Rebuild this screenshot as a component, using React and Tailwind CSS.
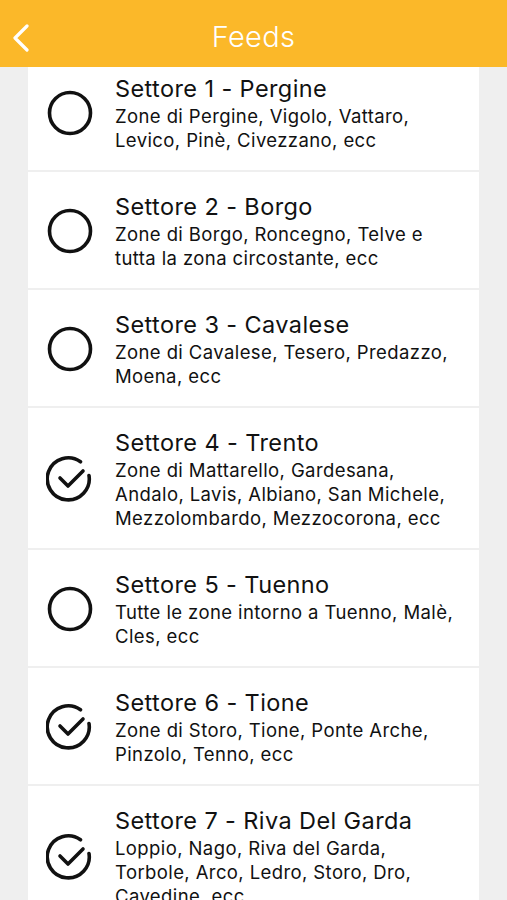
import React from 'react';

const sectors = [
  { title: 'Settore 1 - Pergine', lines: ['Zone di Pergine, Vigolo, Vattaro,', 'Levico, Pinè, Civezzano, ecc'], checked: false },
  { title: 'Settore 2 - Borgo', lines: ['Zone di Borgo, Roncegno, Telve e', 'tutta la zona circostante, ecc'], checked: false },
  { title: 'Settore 3 - Cavalese', lines: ['Zone di Cavalese, Tesero, Predazzo,', 'Moena, ecc'], checked: false },
  { title: 'Settore 4 - Trento', lines: ['Zone di Mattarello, Gardesana,', 'Andalo, Lavis, Albiano, San Michele,', 'Mezzolombardo, Mezzocorona, ecc'], checked: true },
  { title: 'Settore 5 - Tuenno', lines: ['Tutte le zone intorno a Tuenno, Malè,', 'Cles, ecc'], checked: false },
  { title: 'Settore 6 - Tione', lines: ['Zone di Storo, Tione, Ponte Arche,', 'Pinzolo, Tenno, ecc'], checked: true },
  { title: 'Settore 7 - Riva Del Garda', lines: ['Loppio, Nago, Riva del Garda,', 'Torbole, Arco, Ledro, Storo, Dro,', 'Cavedine, ecc'], checked: true },
];

function Radio({ checked }) {
  if (checked) {
    return (
      <svg width="48" height="48" viewBox="0 0 48 48" fill="none" stroke="#111" strokeWidth="3.6" strokeLinecap="round" strokeLinejoin="round">
        <path d="M43 20.5 A21 21 0 1 1 34.5 6.8" />
        <path d="M14 23 L22 31 L37 16" />
      </svg>
    );
  }
  return (
    <svg width="48" height="48" viewBox="0 0 48 48" fill="none" stroke="#111" strokeWidth="3.6">
      <circle cx="24" cy="24" r="20.5" />
    </svg>
  );
}

export default function App() {
  return (
    <div className="w-[507px] h-[900px] overflow-hidden flex flex-col bg-[#efefef]" style={{ fontFamily: 'Inter, "Liberation Sans", sans-serif' }}>
      <div className="h-[67px] shrink-0 bg-[#fbb829] flex items-center relative z-10">
        <svg className="absolute left-[11px] top-[24px]" width="20" height="28" viewBox="0 0 20 28" fill="none" stroke="#fff" strokeWidth="3.2" strokeLinecap="round" strokeLinejoin="round">
          <path d="M16 2 L4 14 L16 26" />
        </svg>
        <div className="w-full pt-[7px] text-center text-white text-[29px] font-light tracking-[0.3px]">Feeds</div>
      </div>
      <div className="flex-1 overflow-hidden">
        <div className="mt-[-13px] flex flex-col gap-[2px] px-[28px]">
          {sectors.map((s) => (
            <div key={s.title} className="bg-white flex items-center pl-[18px] pr-[14px] pt-[20px] pb-[18px]">
              <div className="w-[48px] shrink-0 flex justify-center">
                <Radio checked={s.checked} />
              </div>
              <div className="ml-[21px] flex flex-col text-[#111] whitespace-nowrap">
                <div className="text-[23.5px] leading-[30px] tracking-[0.4px]">{s.title}</div>
                {s.lines.map((l) => (
                  <div key={l} className="text-[18.5px] leading-[24px] tracking-[0.4px]">{l}</div>
                ))}
              </div>
            </div>
          ))}
        </div>
      </div>
    </div>
  );
}
